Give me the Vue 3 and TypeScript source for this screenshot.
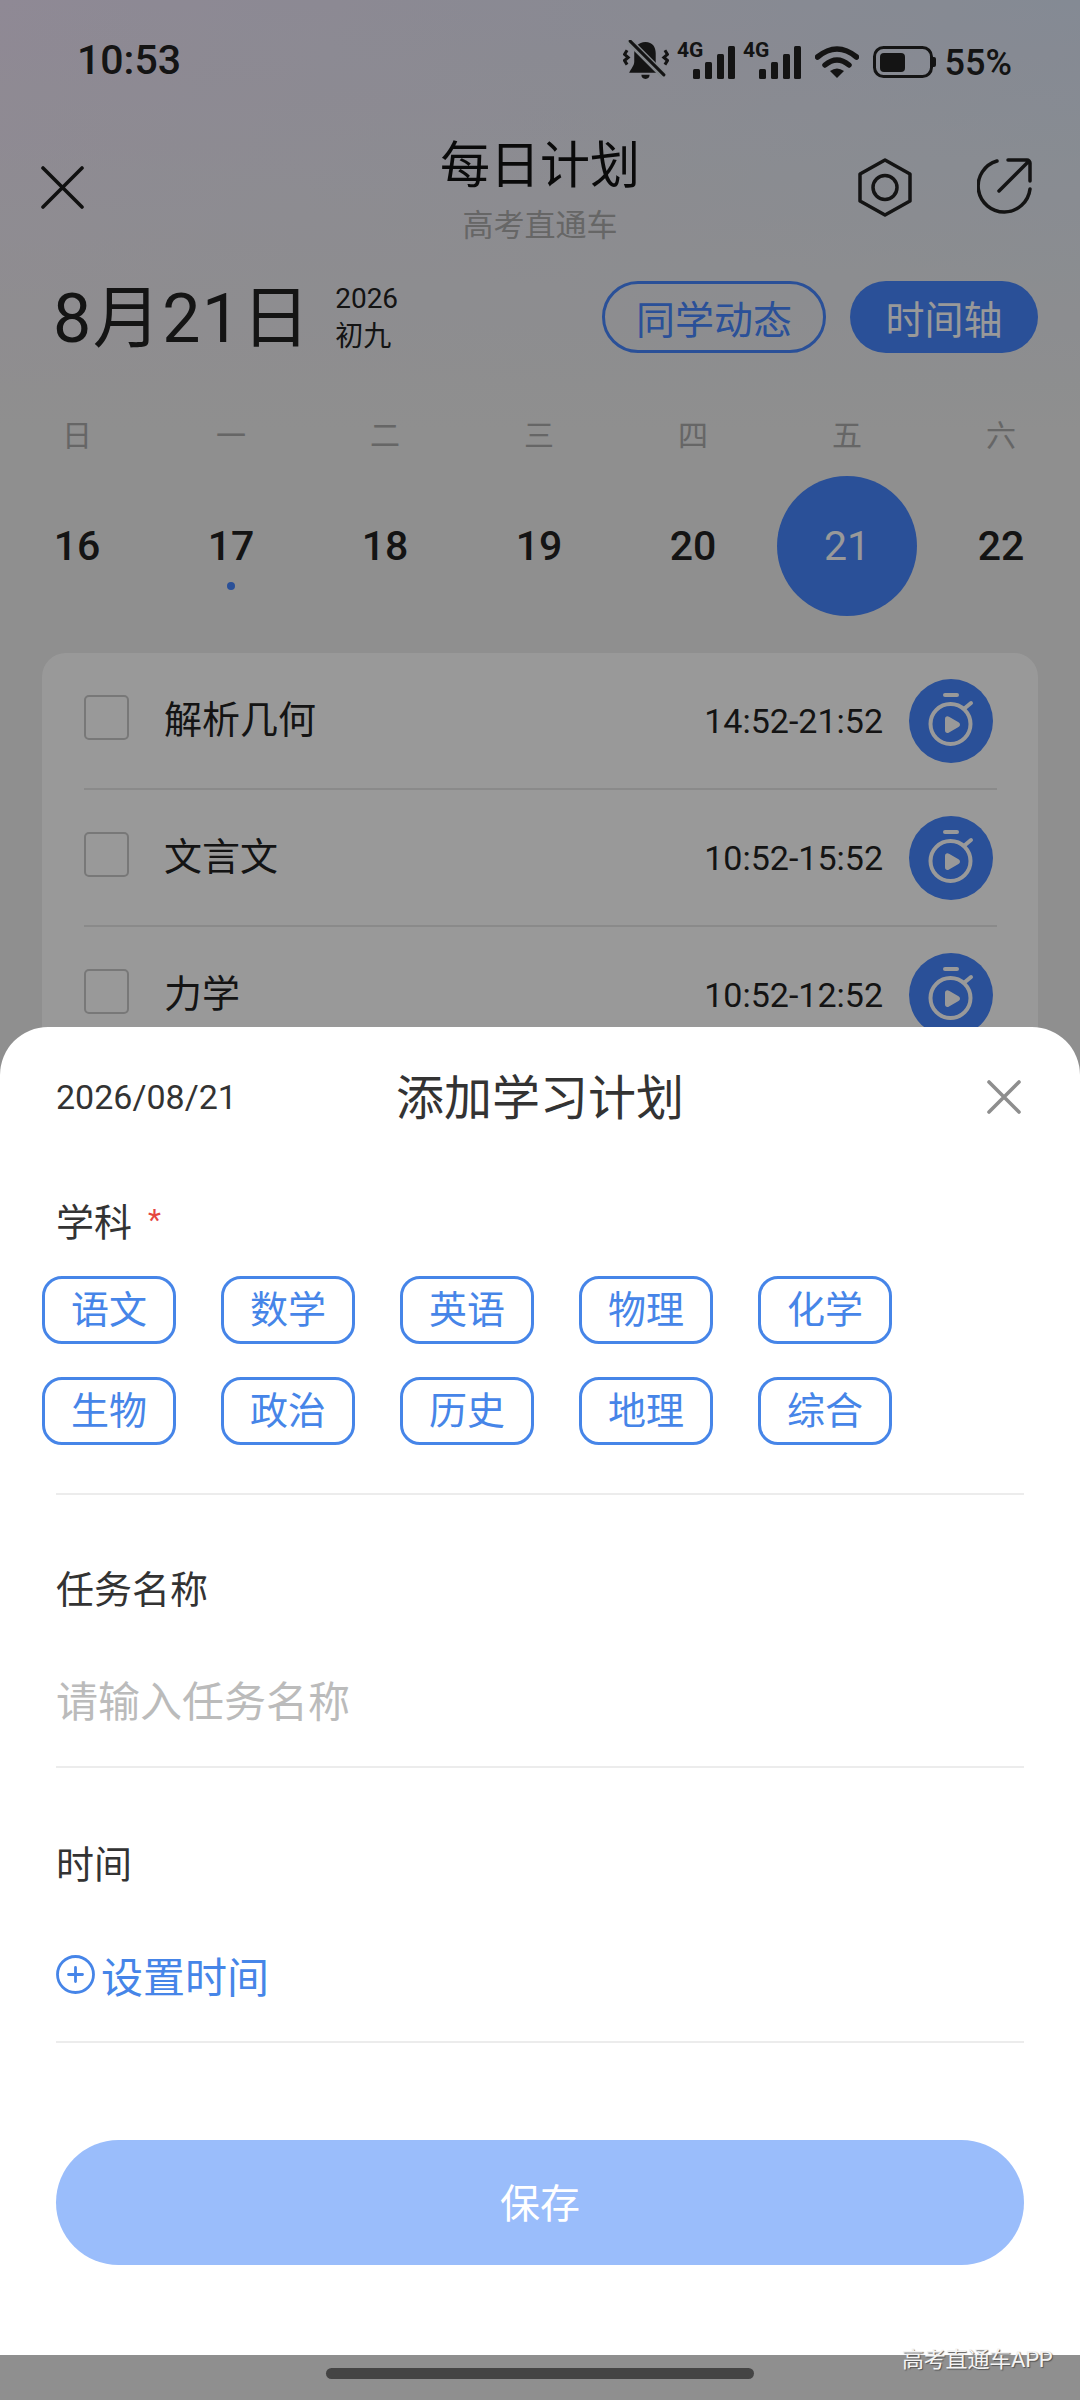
<script setup lang="ts">
interface Task {
  name: string
  time: string
}

const weekdays = ['日', '一', '二', '三', '四', '五', '六']
const days = [16, 17, 18, 19, 20, 21, 22]
const selectedDay = 21
const markedDay = 17

const tasks: Task[] = [
  { name: '解析几何', time: '14:52-21:52' },
  { name: '文言文', time: '10:52-15:52' },
  { name: '力学', time: '10:52-12:52' },
]

const subjects = ['语文', '数学', '英语', '物理', '化学', '生物', '政治', '历史', '地理', '综合']
const signalBars = [
  { x: 16, h: 10 },
  { x: 28, h: 17 },
  { x: 40, h: 25 },
  { x: 51, h: 33 },
]
</script>

<template>
  <div class="page">
    <div class="status">
      <span class="clock">10:53</span>
      <div class="status-icons">
        <svg class="ic-bell" width="46" height="40" viewBox="0 0 45 39">
          <path d="M22 2c7 0 10 5 10 11v8c0 4 3 7 5 11H6c2-4 5-7 5-11v-8c0-6 4-11 11-11z" fill="#222" />
          <path d="M18 34h8a4 4 0 0 1-8 0z" fill="#222" />
          <path d="M6 1l34 34" stroke="#dde3ea" stroke-width="7" />
          <path d="M7 1l33 33" stroke="#222" stroke-width="3" stroke-linecap="round" />
          <path d="M4 10l-2.500 4 3.500 3-3.500 3 2.500 4M41 10l2.500 4-3.500 3 3.500 3-2.500 4" stroke="#222" stroke-width="3" fill="none" />
        </svg>
        <svg v-for="n in 2" :key="n" class="ic-signal" width="58" height="46" viewBox="0 0 58 46">
          <text x="0" y="23" class="net">4G</text>
          <rect v-for="b in signalBars" :key="b.x" :x="b.x" :y="45 - b.h" width="7" :height="b.h" rx="1.5" fill="#222" />
        </svg>
        <svg class="ic-wifi" width="44" height="32" viewBox="0 0 44 32">
          <path d="M2.500 11Q22-5 41.500 11" stroke="#222" stroke-width="5.500" fill="none" stroke-linecap="round" />
          <path d="M10 19Q22 9 34 19" stroke="#222" stroke-width="5.500" fill="none" stroke-linecap="round" />
          <path d="M15 25Q22 20 29 25L22 32Z" fill="#222" />
        </svg>
        <svg class="ic-battery" width="63" height="32" viewBox="0 0 63 32">
          <rect x="1.500" y="1.500" width="57" height="29" rx="9" fill="none" stroke="#222" stroke-width="3" />
          <rect x="7" y="7" width="25" height="19" rx="4" fill="#222" />
          <path d="M60 11h1a2 2 0 0 1 2 2v6a2 2 0 0 1-2 2h-1z" fill="#222" />
        </svg>
        <span class="percent">55%</span>
      </div>
    </div>

    <header class="top">
      <svg class="top-close" width="43" height="43" viewBox="0 0 43 43">
        <path d="M2 2l39 39M41 2L2 41" stroke="#1c1c1c" stroke-width="3.600" stroke-linecap="round" />
      </svg>
      <div class="top-title">
        <h1>每日计划</h1>
        <p>高考直通车</p>
      </div>
      <div class="top-actions">
        <svg width="54" height="59" viewBox="0 0 54 59">
          <path d="M27 2l25 14v27L27 57 2 43V16z" fill="none" stroke="#222" stroke-width="3.500" stroke-linejoin="round" />
          <circle cx="27" cy="29.500" r="12" fill="none" stroke="#222" stroke-width="3.500" />
        </svg>
        <svg width="55" height="57" viewBox="0 0 55 57">
          <path d="M20 3A26 26 0 1 0 53 31" fill="none" stroke="#222" stroke-width="3.500" stroke-linecap="round" />
          <path d="M31 2h19a3 3 0 0 1 3 3v18M22 33L52 3" fill="none" stroke="#222" stroke-width="3.500" stroke-linecap="round" />
        </svg>
      </div>
    </header>

    <div class="date-row">
      <div class="today">8月21日</div>
      <div class="today-sub">
        <span>2026</span>
        <span>初九</span>
      </div>
      <div class="date-btns">
        <button class="pill pill-line">同学动态</button>
        <button class="pill pill-solid">时间轴</button>
      </div>
    </div>

    <div class="weekdays">
      <span v-for="w in weekdays" :key="w">{{ w }}</span>
    </div>
    <div class="days">
      <div v-for="d in days" :key="d" class="day">
        <span class="day-num" :class="{ active: d === selectedDay }">{{ d }}</span>
        <i v-if="d === markedDay" class="day-dot"></i>
      </div>
    </div>

    <div class="card">
      <div v-for="t in tasks" :key="t.name" class="task">
        <span class="check"></span>
        <span class="task-name">{{ t.name }}</span>
        <span class="task-time">{{ t.time }}</span>
        <svg class="task-play" width="84" height="84" viewBox="0 0 84 84">
          <circle cx="42" cy="42" r="42" fill="#4685fd" />
          <rect x="34" y="14" width="16" height="4" rx="2" fill="#fff" />
          <circle cx="41.500" cy="45" r="20" fill="none" stroke="#fff" stroke-width="4" />
          <path d="M56 29l6-5" stroke="#fff" stroke-width="4" stroke-linecap="round" />
          <path d="M36 40c0-2.500 2-3.500 4-2.300l9.500 5.500c2 1.200 2 3.600 0 4.800L40 53.500c-2 1.200-4 .2-4-2.300z" fill="#fff" />
        </svg>
      </div>
    </div>

    <div class="scrim"></div>

    <section class="sheet">
      <div class="sheet-head">
        <span class="sheet-date">2026/08/21</span>
        <h2>添加学习计划</h2>
        <svg class="sheet-close" width="34" height="34" viewBox="0 0 34 34">
          <path d="M2 2l30 30M32 2L2 32" stroke="#8e8e8e" stroke-width="3.600" stroke-linecap="round" />
        </svg>
      </div>

      <div class="label label-subject">学科<em>*</em></div>
      <div class="chips">
        <span v-for="s in subjects" :key="s" class="chip">{{ s }}</span>
      </div>
      <hr class="line line-subject" />

      <div class="label label-name">任务名称</div>
      <input class="name-input" type="text" placeholder="请输入任务名称" />
      <hr class="line line-name" />

      <div class="label label-time">时间</div>
      <div class="set-time">
        <svg width="39" height="39" viewBox="0 0 39 39">
          <circle cx="19.500" cy="19.500" r="18" fill="none" stroke="#4685e8" stroke-width="2.800" />
          <path d="M12.500 19.500h14M19.500 12.500v14" stroke="#4685e8" stroke-width="2.800" stroke-linecap="round" />
        </svg>
        <span>设置时间</span>
      </div>
      <hr class="line line-time" />

      <button class="save">保存</button>
    </section>

    <i class="home-bar"></i>
    <span class="watermark">高考直通车APP</span>
  </div>
</template>

<style>
html,
body {
  margin: 0;
  background: #979797;
}
</style>

<style scoped>
.page {
  position: relative;
  width: 1080px;
  height: 2400px;
  overflow: hidden;
  font-family: Roboto, 'Noto Sans CJK SC', sans-serif;
  color: #222;
  background:
    linear-gradient(180deg, rgba(238, 238, 238, 0) 0, #eee 430px),
    linear-gradient(100deg, #eee4f8 0, #e4e6f4 45%, #d5e6fa 100%);
}

.status {
  height: 120px;
  display: flex;
  align-items: center;
  justify-content: space-between;
  padding: 0 68px 0 77px;
  box-sizing: border-box;
}

.clock {
  font-size: 41px;
  font-weight: 500;
}

.status-icons {
  display: flex;
  align-items: flex-end;
  height: 40px;
}

.status-icons svg {
  display: block;
  flex: none;
}

.ic-bell {
  margin-right: 8px;
}

.ic-signal {
  margin-right: 8px;
}

.net {
  font-size: 21px;
  font-weight: 700;
  fill: #222;
}

.ic-wifi {
  margin: 0 14px 2px 6px;
}

.ic-battery {
  margin: 0 9px 2px 0;
}

.percent {
  font-size: 36px;
  line-height: 32px;
  font-weight: 500;
  margin-bottom: 1px;
}

.top {
  height: 135px;
  display: grid;
  grid-template-columns: 1fr auto 1fr;
  align-items: center;
  padding: 0 48px;
  margin-bottom: 26px;
}

.top-close {
  display: block;
  margin-left: -7px;
}

.top-title {
  text-align: center;
}

.top-title h1 {
  margin: 0;
  font-size: 50px;
  line-height: 72px;
  font-weight: 400;
  color: #111;
}

.top-title p {
  margin: 4px 0 0;
  font-size: 31px;
  line-height: 40px;
  color: #aaa;
}

.top-actions {
  display: flex;
  justify-content: flex-end;
  gap: 65px;
}

.date-row {
  height: 72px;
  display: flex;
  align-items: center;
  padding: 0 42px 0 53px;
}

.today {
  font-size: 68px;
  line-height: 72px;
  letter-spacing: 1.5px;
  transform: translateY(2px);
}

.today-sub {
  display: flex;
  flex-direction: column;
  gap: 8px;
  margin-left: 24px;
  font-size: 28px;
  line-height: 30px;
  transform: translateY(1px);
}

.date-btns {
  display: flex;
  gap: 24px;
  margin-left: auto;
}

.pill {
  height: 72px;
  padding: 0;
  border-radius: 36px;
  font-family: inherit;
  font-size: 39px;
  box-sizing: border-box;
}

.pill-line {
  width: 224px;
  background: none;
  border: 3px solid #4685fd;
  color: #4685fd;
}

.pill-solid {
  width: 188px;
  background: #4685fd;
  border: 0;
  color: #fff;
}

.weekdays,
.days {
  display: grid;
  grid-template-columns: repeat(7, 154px);
}

.weekdays {
  margin-top: 63px;
  font-size: 30px;
  line-height: 40px;
  text-align: center;
  color: #aaa;
}

.days {
  margin-top: 20px;
}

.day {
  position: relative;
  height: 140px;
  display: flex;
  align-items: center;
  justify-content: center;
}

.day-num {
  width: 140px;
  height: 140px;
  line-height: 140px;
  text-align: center;
  border-radius: 50%;
  font-size: 41px;
  font-weight: 500;
}

.day-num.active {
  background: #4685fd;
  color: #fff;
  font-weight: 400;
}

.day-dot {
  position: absolute;
  left: 73px;
  top: 106px;
  width: 8px;
  height: 8px;
  border-radius: 50%;
  background: #4685fd;
}

.card {
  margin: 37px 42px 0;
  padding: 0 41px 0 42px;
  background: #fff;
  border-radius: 24px;
}

.task {
  height: 137px;
  display: flex;
  align-items: center;
  border-bottom: 2px solid #e6e6e6;
  box-sizing: border-box;
}

.check {
  width: 45px;
  height: 45px;
  margin-top: -6px;
  border: 2px solid #c8c8c8;
  border-radius: 5px;
  box-sizing: border-box;
}

.task-name {
  margin-left: 35px;
  margin-top: -9px;
  font-size: 38px;
}

.task-time {
  margin-left: auto;
  margin-right: 26px;
  font-size: 34px;
}

.task-play {
  display: block;
  margin-right: 4px;
}

.scrim {
  position: absolute;
  inset: 0;
  background: rgba(0, 0, 0, 0.4);
}

.sheet {
  position: absolute;
  left: 0;
  right: 0;
  top: 1027px;
  bottom: 45px;
  padding: 0 56px;
  background: #fff;
  border-radius: 48px 48px 0 0;
  color: #333;
}

.sheet-head {
  height: 140px;
  display: grid;
  grid-template-columns: 1fr auto 1fr;
  align-items: center;
}

.sheet-date {
  font-size: 34px;
}

.sheet-head h2 {
  margin: -7px 0 0;
  font-size: 48px;
  font-weight: 400;
}

.sheet-close {
  justify-self: end;
  margin-right: 3px;
}

.label {
  font-size: 38px;
  line-height: 54px;
}

.label em {
  margin-left: 16px;
  font-style: normal;
  font-size: 30px;
  line-height: 0;
  vertical-align: 6px;
  color: #e5463f;
}

.label-subject {
  margin-top: 29px;
}

.chips {
  display: grid;
  grid-template-columns: repeat(5, 134px);
  gap: 33px 45px;
  margin: 26px 0 0 -14px;
}

.chip {
  height: 68px;
  line-height: 63px;
  text-align: center;
  font-size: 38px;
  color: #4685e8;
  border: 3px solid #4685e8;
  border-radius: 20px;
  box-sizing: border-box;
}

.line {
  height: 2px;
  margin: 0;
  border: 0;
  background: #ececec;
}

.line-subject {
  margin-top: 48px;
}

.label-name {
  margin-top: 68px;
}

.name-input {
  display: block;
  width: 100%;
  height: 60px;
  margin-top: 55px;
  padding: 0;
  border: 0;
  outline: 0;
  font-family: inherit;
  font-size: 42px;
  color: #333;
}

.name-input::placeholder {
  color: #bbb;
  opacity: 1;
}

.line-name {
  margin-top: 34px;
}

.line-time {
  margin-top: 37px;
}

.label-time {
  margin-top: 70px;
}

.set-time {
  height: 60px;
  margin-top: 52px;
  display: flex;
  align-items: center;
  gap: 6px;
  font-size: 42px;
  color: #4685e8;
}

.save {
  display: block;
  width: 100%;
  height: 125px;
  margin-top: 97px;
  padding: 0 0 3px;
  border: 0;
  border-radius: 63px;
  background: #9abdfb;
  color: #fff;
  font-family: inherit;
  font-size: 40px;
}

.home-bar {
  position: absolute;
  left: 326px;
  top: 2368px;
  width: 428px;
  height: 11px;
  border-radius: 6px;
  background: #444;
}

.watermark {
  position: absolute;
  left: 902px;
  top: 2345px;
  font-size: 22px;
  line-height: 30px;
  letter-spacing: -0.2px;
  color: #f4f4f4;
  text-shadow: 1px 1px 1px #555;
}
</style>
